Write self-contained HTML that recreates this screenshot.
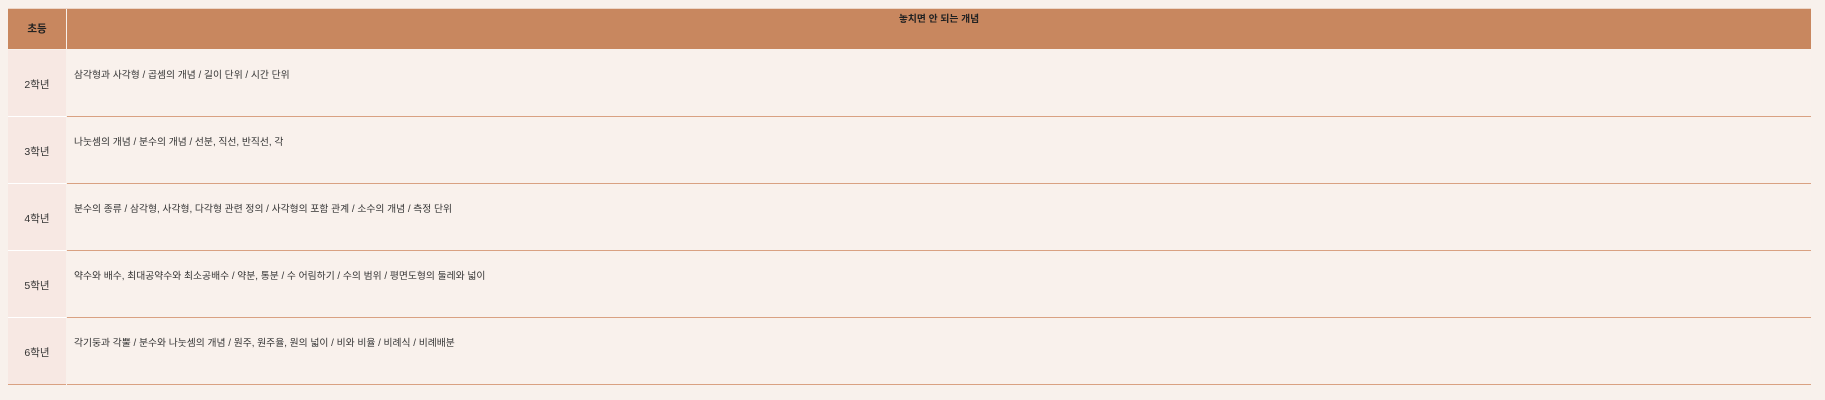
<!DOCTYPE html>
<html><head><meta charset="utf-8"><style>
body{margin:0;background:#f8f1ec;width:1825px;height:400px;font-family:"Liberation Sans","Noto Sans CJK KR",sans-serif;font-size:9.8px;color:#333;}
.t{position:absolute;left:8px;top:8px;width:1803px;}
.hd{position:absolute;top:1px;height:40px;background:#c8875f;font-weight:bold;color:#222;}
.l{position:absolute;left:0;width:58px;background:#f7e8e3;text-align:center;border-bottom:1px solid #fff;font-size:10.5px}
.l div{padding-top:27px}
.c{position:absolute;left:59px;width:1744px;background:#f9f1ec;border-bottom:1px solid #d9a182;}
.c div{padding:17px 0 0 7px}
</style></head><body>
<div class="t">
<div style="position:absolute;top:0;left:0;width:1803px;height:1px;background:#ecd6c8"></div>
<div class="hd" style="left:0;width:58px;line-height:40px;text-align:center;font-size:10.5px">초등</div>
<div class="hd" style="left:59px;width:1744px;text-align:center;line-height:22px">놓치면 안 되는 개념</div>
</div>
<div style="position:absolute;left:8px;top:50px">
<div class="l" style="top:0;height:66px"><div>2학년</div></div>
<div class="c" style="top:0;height:66px"><div>삼각형과 사각형 / 곱셈의 개념 / 길이 단위 / 시간 단위</div></div>
<div class="l" style="top:67px;height:66px"><div>3학년</div></div>
<div class="c" style="top:67px;height:66px"><div>나눗셈의 개념 / 분수의 개념 / 선분, 직선, 반직선, 각</div></div>
<div class="l" style="top:134px;height:66px"><div>4학년</div></div>
<div class="c" style="top:134px;height:66px"><div>분수의 종류 / 삼각형, 사각형, 다각형 관련 정의 / 사각형의 포함 관계 / 소수의 개념 / 측정 단위</div></div>
<div class="l" style="top:201px;height:66px"><div>5학년</div></div>
<div class="c" style="top:201px;height:66px"><div>약수와 배수, 최대공약수와 최소공배수 / 약분, 통분 / 수 어림하기 / 수의 범위 / 평면도형의 둘레와 넓이</div></div>
<div class="l" style="top:268px;height:66px;border-bottom:1px solid #d9a182"><div>6학년</div></div>
<div class="c" style="top:268px;height:66px"><div>각기둥과 각뿔 / 분수와 나눗셈의 개념 / 원주, 원주율, 원의 넓이 / 비와 비율 / 비례식 / 비례배분</div></div>
</div>
</body></html>
